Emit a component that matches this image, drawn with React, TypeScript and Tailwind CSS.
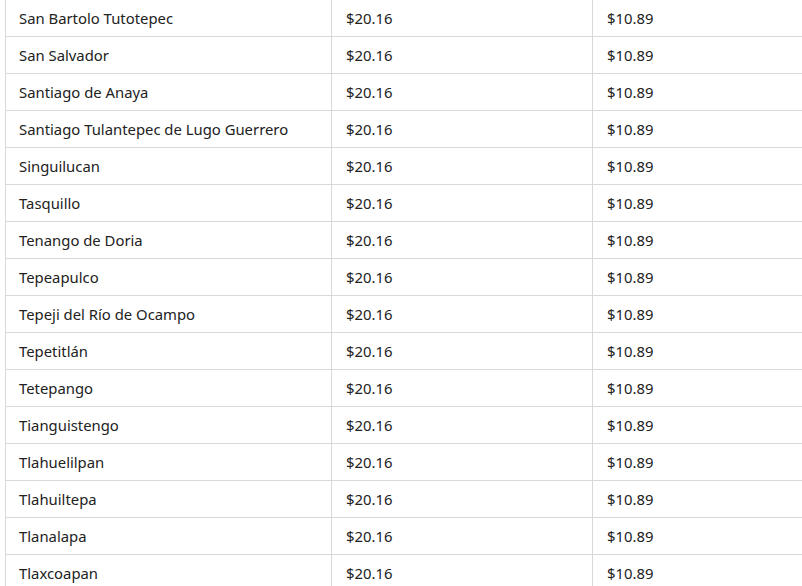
const ROWS = [
  'San Bartolo Tutotepec',
  'San Salvador',
  'Santiago de Anaya',
  'Santiago Tulantepec de Lugo Guerrero',
  'Singuilucan',
  'Tasquillo',
  'Tenango de Doria',
  'Tepeapulco',
  'Tepeji del Río de Ocampo',
  'Tepetitlán',
  'Tetepango',
  'Tianguistengo',
  'Tlahuelilpan',
  'Tlahuiltepa',
  'Tlanalapa',
  'Tlaxcoapan',
]

export default function App() {
  return (
    <div className="h-[586px] w-[802px] overflow-hidden bg-white pl-[5px]">
      <table
        className="-mt-px w-[848px] table-fixed border-collapse text-[14.85px] text-[#222]"
        style={{ fontFamily: '"Noto Sans", "Open Sans", sans-serif' }}
      >
        <colgroup>
          <col className="w-[326px]" />
          <col className="w-[261px]" />
          <col className="w-[261px]" />
        </colgroup>
        <tbody>
          {ROWS.map((name) => (
            <tr key={name} className="h-[37px]">
              <td className="border border-[#d9d9d9] px-[13px] py-0 leading-[36px]">{name}</td>
              <td className="border border-[#d9d9d9] px-[14px] py-0 leading-[36px]">$20.16</td>
              <td className="border border-[#d9d9d9] px-[14px] py-0 leading-[36px]">$10.89</td>
            </tr>
          ))}
        </tbody>
      </table>
    </div>
  )
}
